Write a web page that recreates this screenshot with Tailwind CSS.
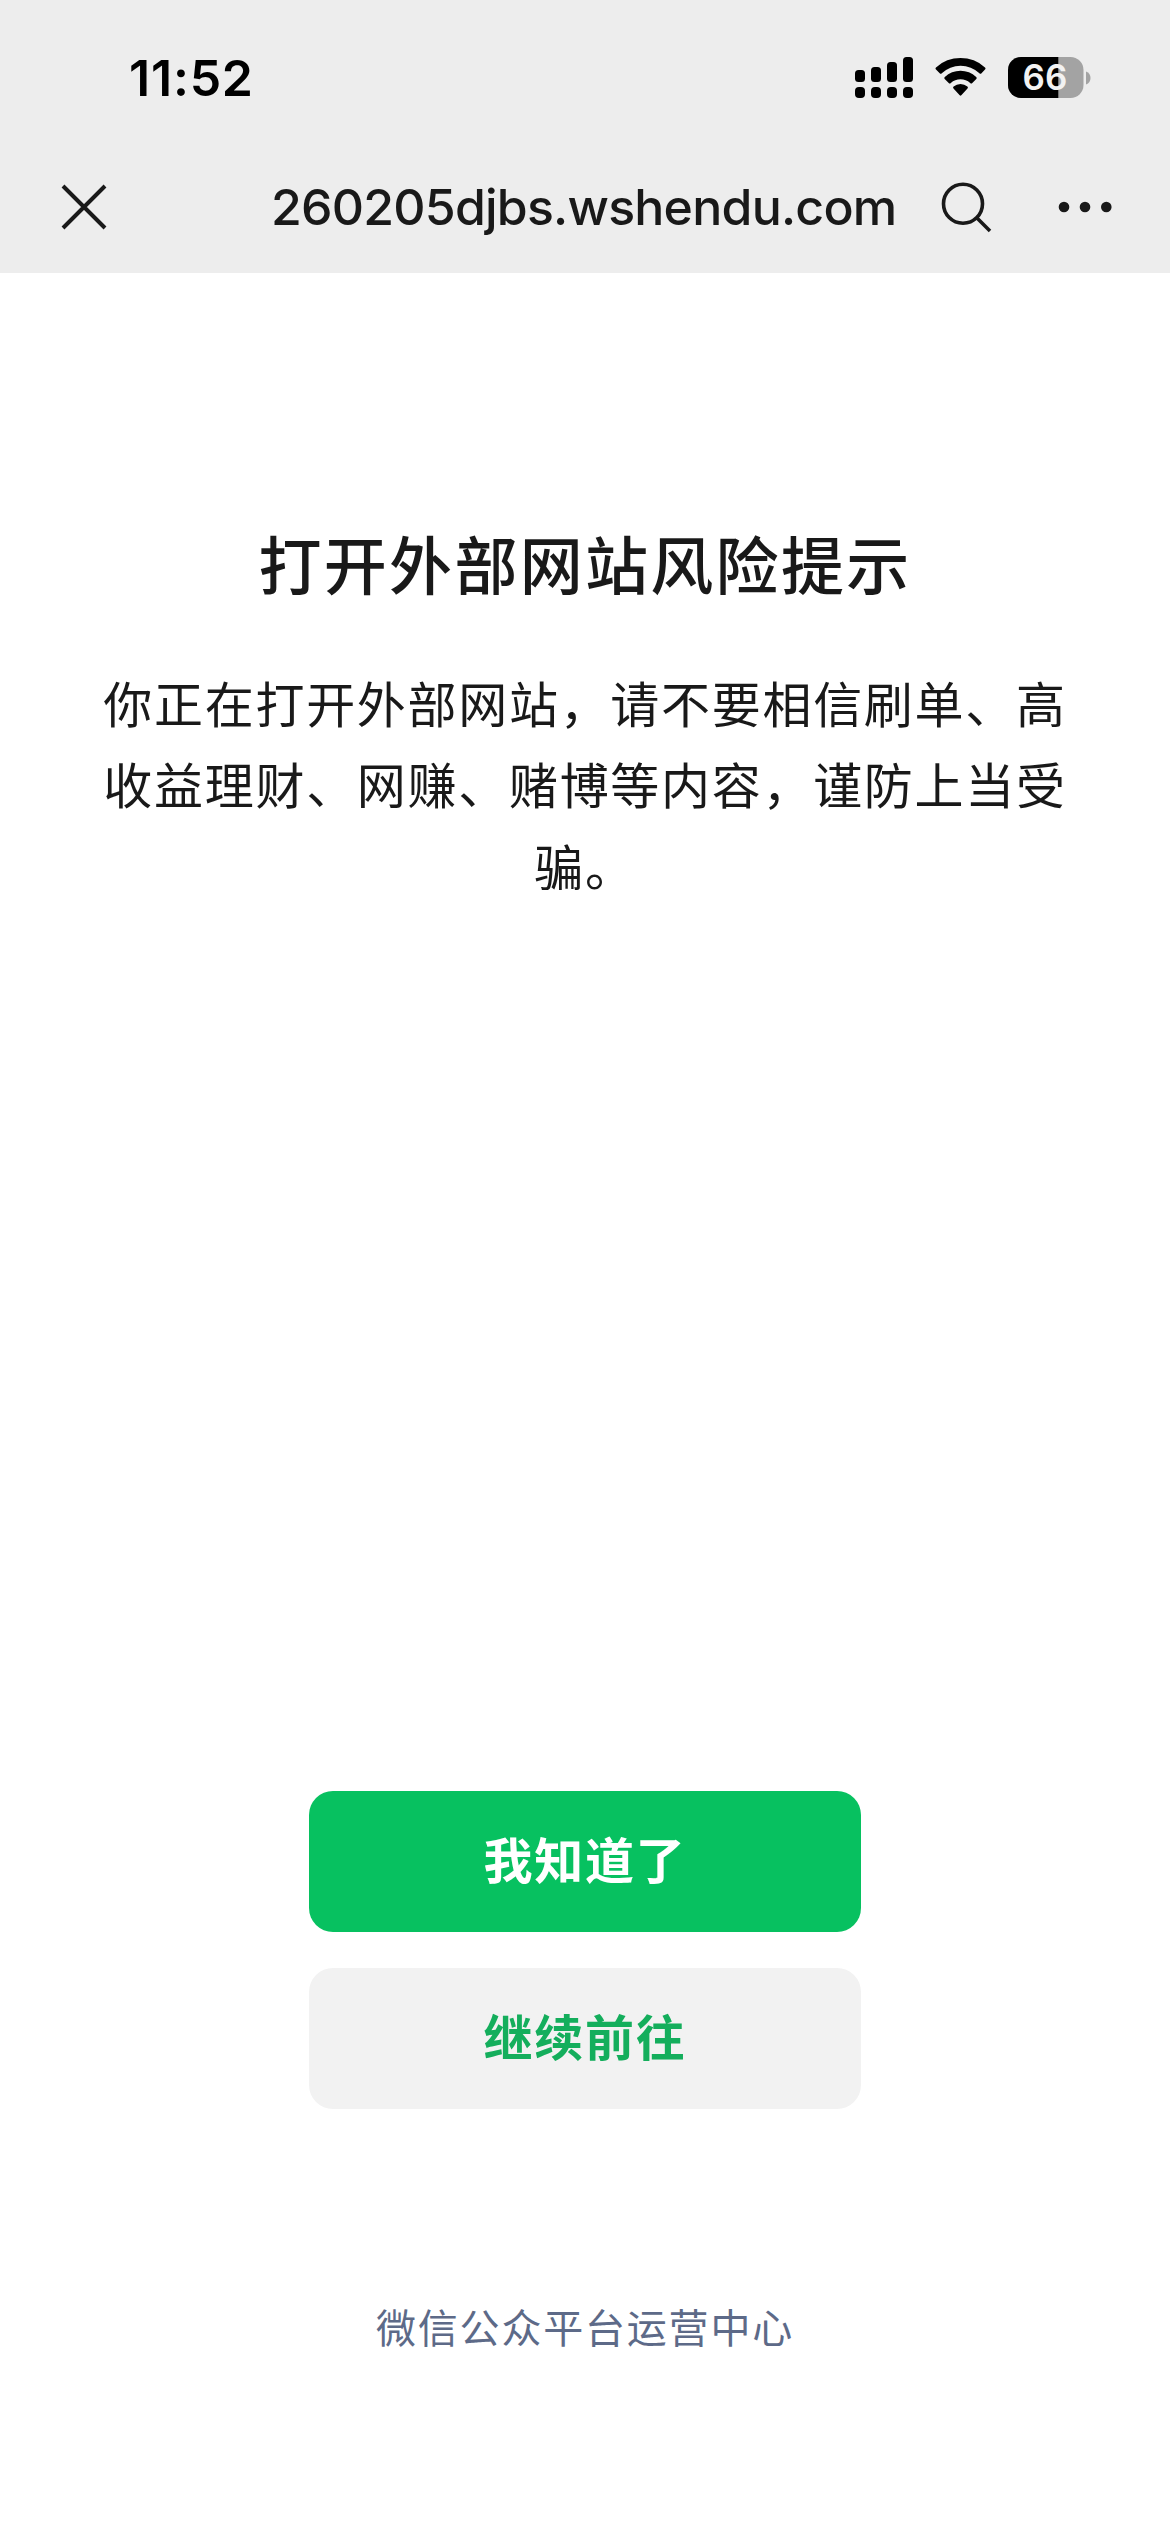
<!DOCTYPE html>
<html lang="zh-CN">
<head>
  <meta charset="UTF-8">
  <meta name="viewport" content="width=device-width, initial-scale=1.0">
  <title>打开外部网站风险提示</title>
  <script src="https://cdn.jsdelivr.net/npm/@tailwindcss/browser@4"></script>
</head>
<body class="bg-white text-[#191919] font-['Inter','Noto_Sans_CJK_SC',sans-serif]">
  <div class="w-[1170px] h-[2532px] flex flex-col overflow-hidden">
    <header class="h-[273px] shrink-0 bg-[#ededed]">
      <!-- Status bar -->
      <div class="h-[156px] flex items-center justify-between pl-[129px] pr-[79px] text-black">
        <span class="text-[50px] leading-none tracking-[0.800px] font-semibold whitespace-nowrap">11:52</span>
        <svg class="w-[236px] h-[42px]" viewBox="856 57 236 42" fill="currentColor">
          <rect x="856" y="70" width="10" height="12" rx="3.5" />
          <rect x="872" y="67" width="10" height="15" rx="3.5" />
          <rect x="888" y="62" width="10" height="20" rx="3.5" />
          <rect x="904" y="57" width="10" height="25" rx="3.5" />
          <rect x="856" y="87" width="10" height="11" rx="4" />
          <rect x="872" y="87" width="10" height="11" rx="4" />
          <rect x="888" y="87" width="10" height="11" rx="4" />
          <rect x="904" y="87" width="10" height="11" rx="4" />
          <path d="M937 69.500Q936 68.500 937 67.500A36 36 0 0 1 986 67.500Q987 68.500 986 69.500L982.500 73.300Q981.500 74.300 980.400 73.300A27.500 27.500 0 0 0 942.800 73.300Q941.700 74.300 940.700 73.300Z" />
          <path d="M945.700 78.900Q944.700 77.900 945.800 76.900A23 23 0 0 1 977.200 76.900Q978.300 77.900 977.300 78.900L973.300 83Q972.300 84 971.200 83A14.500 14.500 0 0 0 951.800 83Q950.700 84 949.700 83Z" />
          <path d="M954.500 88.500Q953.500 87.500 954.600 86.600A10.500 10.500 0 0 1 968.400 86.600Q969.500 87.500 968.500 88.500L962.300 95.300Q961.500 96.100 960.700 95.300Z" />
          <rect x="1009" y="57" width="75.500" height="41" rx="13" fill="#a3a3a3" />
          <path d="M1059.300 57H1022a13 13 0 0 0-13 13v15a13 13 0 0 0 13 13h37.300z" />
          <path d="M1087 71.500c6 2 6 11 0 13z" fill="#a3a3a3" />
          <text x="1046" y="90" text-anchor="middle" font-size="35" font-weight="600" fill="#f2f2f2">66</text>
        </svg>
      </div>

      <!-- Navigation bar -->
      <div class="h-[102px] flex items-center pl-[60px] pr-[57px]">
        <svg class="w-12 h-12" viewBox="60 183 48 48" fill="none" stroke="currentColor" stroke-width="4">
          <path d="M63 186l42 42M105 186l-42 42" />
        </svg>
        <span class="ml-[163px] w-[625px] text-[50px] leading-none tracking-[-0.780px] font-medium whitespace-nowrap">260205djbs.wshendu.com</span>
        <svg class="ml-[44px] w-[52px] h-[52px]" viewBox="940 181 52 52" fill="none" stroke="currentColor" stroke-width="3.600">
          <circle cx="963" cy="203.700" r="19.500" />
          <path d="M976.500 217.500l13.500 13.500" />
        </svg>
        <svg class="ml-auto w-14 h-3" viewBox="1058 201 56 12" fill="currentColor">
          <circle cx="1065" cy="207" r="5.300" />
          <circle cx="1086" cy="207" r="5.300" />
          <circle cx="1107.300" cy="207" r="5.300" />
        </svg>
      </div>
    </header>

    <main class="flex-1 flex flex-col items-center text-center">
      <h1 class="mt-[245px] text-[63px] leading-[96px] tracking-[2.300px] font-medium">打开外部网站风险提示</h1>
      <p class="mt-[51px] w-[966px] text-[49px] leading-[81.300px] tracking-[1.700px]">
        你正在打开外部网站，请不要相信刷单、高<br>收益理财、网赚、赌博等内容，谨防上当受<br>骗。
      </p>

      <div class="mt-auto flex flex-col gap-9">
        <button class="w-[552px] h-[141px] rounded-3xl bg-[#07c160] text-white text-[49px] tracking-[1.700px] font-bold">我知道了</button>
        <button class="w-[552px] h-[141px] rounded-3xl bg-[#f2f2f2] text-[#14ae5c] text-[49px] tracking-[1.700px] font-bold">继续前往</button>
      </div>
      <a class="mt-[188px] mb-[172px] text-[40px] leading-[63px] tracking-[1.800px] text-[#5d6a88]">微信公众平台运营中心</a>
    </main>
  </div>
</body>
</html>
